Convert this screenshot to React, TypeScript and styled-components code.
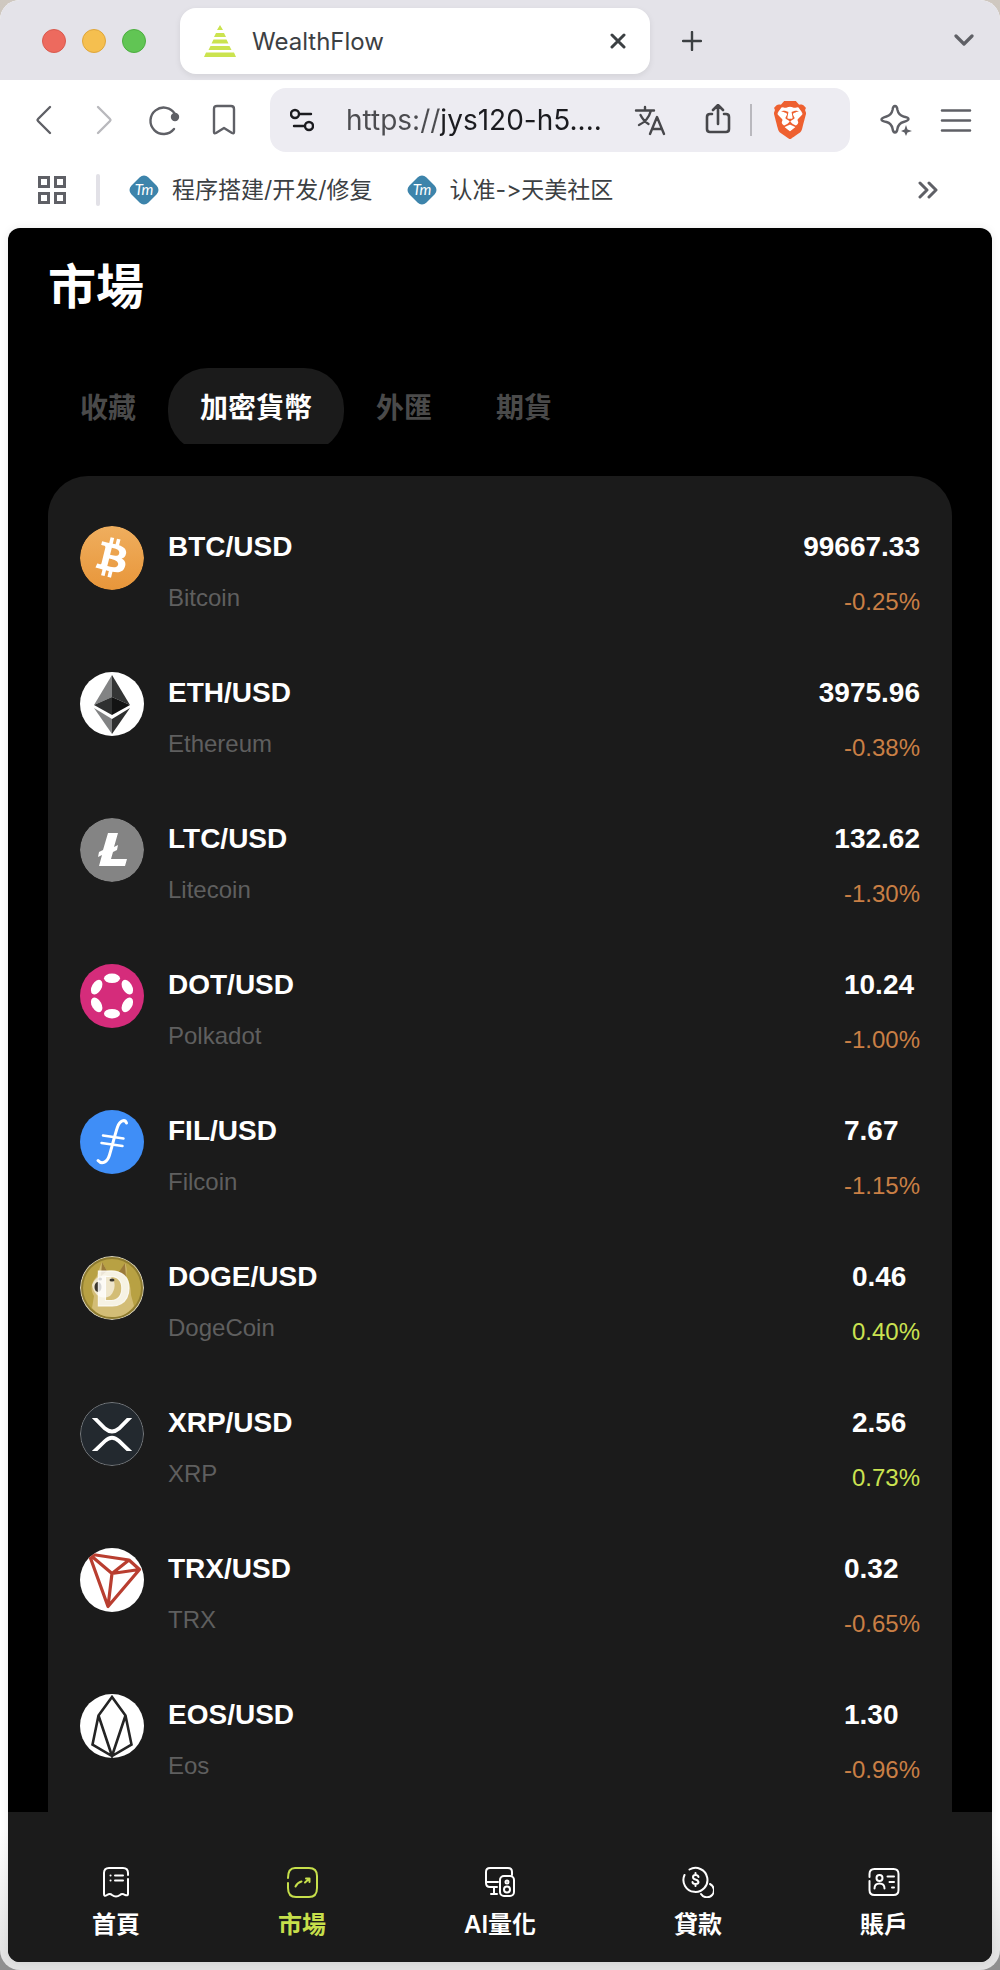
import React, { useState } from 'react';
import styled, { createGlobalStyle, css } from 'styled-components';
import { SiBitcoin, SiBrave } from 'react-icons/si';

const GlobalStyle = createGlobalStyle`
  *, *::before, *::after { box-sizing: border-box; }
  body {
    margin: 0;
    background: linear-gradient(#cfc8c0, #8f8f8f);
    font-family: "Liberation Sans", "Noto Sans CJK TC", sans-serif;
  }
  button { border: 0; padding: 0; background: none; font: inherit; color: inherit; cursor: pointer; }
  a { color: inherit; text-decoration: none; }
  h1, p, ul { margin: 0; padding: 0; }
  ul { list-style: none; }
  svg { display: block; }
`;

const uiFont = css`
  font-family: Inter, "Noto Sans CJK SC", sans-serif;
  font-variant-ligatures: none;
  font-feature-settings: "calt" 0;
`;

const Window = styled.div`
  display: flex;
  flex-direction: column;
  height: 100vh;
  border-radius: 20px;
  overflow: hidden;
  background: linear-gradient(#ffffff calc(100% - 140px), #e2e2e2 calc(100% - 8px));
`;

/* ---------- browser chrome ---------- */

const TabStrip = styled.header`
  ${uiFont}
  display: flex;
  align-items: center;
  height: 80px;
  padding: 2px 26px 0 42px;
  background: #e4e3e9;
  color: #3c4043;
`;

const Lights = styled.div`
  display: flex;
  gap: 16px;
  margin-right: 34px;
`;

const Light = styled.button<{ $fill: string; $edge: string }>`
  width: 24px;
  height: 24px;
  border-radius: 50%;
  background: ${(p) => p.$fill};
  border: 1px solid ${(p) => p.$edge};
`;

const BrowserTab = styled.div`
  display: flex;
  align-items: center;
  flex: 0 1 470px;
  gap: 16px;
  height: 66px;
  padding: 0 24px;
  border-radius: 16px;
  background: #ffffff;
  box-shadow: 0 2px 6px rgba(0, 0, 0, 0.08);
  font-size: 24px;
`;

const BrowserTabTitle = styled.span`
  flex: 1;
`;

const NewTab = styled.button`
  margin: 0 auto 0 32px;
`;

const TabSearch = styled.button`
  color: #5f6066;
`;

const Toolbar = styled.nav`
  display: flex;
  align-items: center;
  gap: 28px;
  height: 80px;
  padding: 0 28px;
  color: #5f6066;
`;

const IconButton = styled.button<{ $dim?: boolean }>`
  flex: none;
  width: 32px;
  height: 32px;
  color: ${(p) => (p.$dim ? '#b9b9bd' : 'inherit')};
`;

const AddressBar = styled.div`
  ${uiFont}
  display: flex;
  align-items: center;
  flex: 1;
  min-width: 0;
  height: 64px;
  margin: 0 2px;
  padding: 0 44px 0 20px;
  border-radius: 16px;
  background: #edecf2;
  color: #47474b;
`;

const AddressInput = styled.input`
  flex: 1;
  min-width: 0;
  margin: 0 16px 0 32px;
  padding: 0;
  border: 0;
  outline: 0;
  font-family: inherit;
  font-size: 28px;
  color: transparent;
  background: linear-gradient(90deg, #4c4c50 93px, #1b1b1f 93px);
  background-clip: text;
`;

const AddressActions = styled.div`
  display: flex;
  align-items: center;
  gap: 36px;
`;

const AddressDivider = styled.span`
  width: 2px;
  height: 32px;
  margin: 0 22px 0 16px;
  background: #b9b8be;
`;

const Bookmarks = styled.nav`
  ${uiFont}
  display: flex;
  align-items: center;
  height: 68px;
  padding: 0 62px 8px 38px;
  color: #5f6066;
`;

const BookmarkDivider = styled.span`
  width: 4px;
  height: 32px;
  margin: 0 29px 0 30px;
  border-radius: 2px;
  background: #e2e1e7;
`;

const Bookmark = styled.a`
  display: flex;
  align-items: center;
  gap: 13px;
  margin-right: 34px;
  font-size: 23px;
  line-height: 32px;
  color: #3c4043;
  white-space: nowrap;
`;

const MoreBookmarks = styled.button`
  margin-left: auto;
`;

/* ---------- page ---------- */

const Page = styled.div`
  display: flex;
  flex-direction: column;
  flex: 1;
  min-height: 0;
  margin: 0 8px 8px;
  border-radius: 12px;
  overflow: hidden;
  background: #000000;
  color: #ffffff;
  box-shadow: 0 0 8px rgba(0, 0, 0, 0.08);
`;

const Scroller = styled.main`
  flex: 1;
  min-height: 0;
  overflow-y: auto;
  scrollbar-width: none;
  padding: 24px 40px 0;
`;

const Title = styled.h1`
  font-size: 48px;
  line-height: 72px;
  font-weight: 700;
`;

const Segments = styled.div`
  display: flex;
  height: 76px;
  margin: 44px 0 32px;
  overflow: hidden;
`;

const Segment = styled.button<{ $active: boolean }>`
  flex: none;
  height: 84px;
  padding: 0 32px 8px;
  border-radius: 40px;
  font-size: 28px;
  font-weight: 700;
  color: ${(p) => (p.$active ? '#ffffff' : '#4a4a4a')};
  background: ${(p) => (p.$active ? '#1b1b1b' : 'transparent')};
`;

const QuoteList = styled.ul`
  padding: 25px 32px 0;
  border-radius: 40px 40px 0 0;
  background: #1b1b1b;
`;

const QuoteRow = styled.a`
  display: flex;
  align-items: flex-start;
  gap: 24px;
  padding: 25px 0;
  line-height: 40px;
`;

const CoinMark = styled.span`
  flex: none;
  width: 64px;
  height: 64px;
  border-radius: 50%;
  overflow: hidden;
`;

const Names = styled.div`
  flex: 1;
  display: grid;
  gap: 10px;
`;

const Figures = styled.div`
  display: grid;
  gap: 14px;
`;

const Strong = styled.p`
  font-size: 28px;
  line-height: 42px;
  font-weight: 700;
`;

const CoinName = styled.p`
  font-size: 24px;
  color: #5f5f5f;
`;

const Change = styled.p<{ $up: boolean }>`
  font-size: 24px;
  text-align: right;
  color: ${(p) => (p.$up ? '#cbe351' : '#c97f45')};
`;

const TabBar = styled.nav`
  display: flex;
  justify-content: space-between;
  height: 150px;
  padding: 54px 84px 0;
  background: #1b1b1b;
`;

const TabItem = styled.a<{ $active: boolean }>`
  display: flex;
  flex-direction: column;
  align-items: center;
  gap: 11px;
  font-family: Inter, "Noto Sans CJK TC", sans-serif;
  font-size: 24px;
  font-weight: 600;
  line-height: 32px;
  color: ${(p) => (p.$active ? '#c6df4b' : '#ffffff')};
`;

/* ---------- drawings ---------- */

const line = {
  fill: 'none',
  stroke: 'currentColor',
  strokeLinecap: 'round' as const,
  strokeLinejoin: 'round' as const,
};

const Line = ({ size = 32, w = 2, children }: { size?: number; w?: number; children: React.ReactNode }) => (
  <svg width={size} height={size} viewBox={`0 0 ${size} ${size}`} {...line} strokeWidth={w} aria-hidden="true">
    {children}
  </svg>
);

const Pyramid = () => (
  <svg width="32" height="32" viewBox="0 0 32 32" fill="#cbe34f" aria-hidden="true">
    <path d="M16 0l3 5h-6zM12 8h8l2 4H10zM9.500 14.500h13l2 4h-17zM6.500 21h19l2 4h-23zM2 27.500h28l2 4.500H0z" />
  </svg>
);

const Diamond = () => (
  <svg width="30" height="30" viewBox="0 0 30 30" aria-hidden="true">
    <rect x="3" y="3" width="24" height="24" rx="6" fill="#3d84ab" transform="rotate(45 15 15)" />
    <text x="15" y="20" textAnchor="middle" fontFamily="Lato, sans-serif" fontStyle="italic" fontSize="15" fill="#fff">Tm</text>
  </svg>
);

const Bitcoin = () => (
  <svg width="64" height="64" viewBox="0 0 64 64">
    <defs>
      <linearGradient id="btc" x1="0" y1="0" x2="0" y2="1">
        <stop offset="0" stopColor="#efae5e" />
        <stop offset="1" stopColor="#e8963a" />
      </linearGradient>
    </defs>
    <circle cx="32" cy="32" r="31" fill="#fff" />
    <SiBitcoin size={64} fill="url(#btc)" />
  </svg>
);

const Ethereum = () => (
  <svg width="64" height="64" viewBox="0 0 64 64">
    <rect width="64" height="64" fill="#fff" />
    <path d="M32 3L14 33l18-8z" fill="#828384" />
    <path d="M32 3l18 30-18-8z" fill="#343535" />
    <path d="M14 33l18-8v18z" fill="#2f3030" />
    <path d="M50 33l-18-8v18z" fill="#131313" />
    <path d="M14 36l18 11v15z" fill="#828384" />
    <path d="M50 36L32 47v15z" fill="#2f3030" />
  </svg>
);

const Litecoin = () => (
  <svg width="64" height="64" viewBox="0 0 64 64">
    <circle cx="32" cy="32" r="32" fill="#848484" />
    <path d="M28 15h10l-4 14 4-2-1 5-4 2-2 7h16l-2 7H19l3-11-4 2 1-5 4-2z" fill="#fff" />
  </svg>
);

const Polkadot = () => (
  <svg width="64" height="64" viewBox="0 0 64 64">
    <rect width="64" height="64" fill="#d52c7b" />
    {[0, 60, 120, 180, 240, 300].map((a) => (
      <ellipse key={a} cx="32" cy="14.300" rx="8" ry="4.800" fill="#fff" transform={`rotate(${a} 32 32)`} />
    ))}
  </svg>
);

const Filecoin = () => (
  <svg width="64" height="64" viewBox="0 0 64 64" fill="none" stroke="#fff" strokeLinecap="round">
    <rect width="64" height="64" fill="#3f8ef7" stroke="none" />
    <path d="M46.500 13C45 9 40 10 37.500 17C34.500 26 32 37 29.500 45C27.500 52 22 55 18 50.500" strokeWidth="3" />
    <path d="M23 25.500l20.500 3M21.500 33l21 3" strokeWidth="2.500" />
  </svg>
);

const Dogecoin = () => (
  <svg width="64" height="64" viewBox="0 0 64 64">
    <circle cx="32" cy="32" r="32" fill="#d9d3bb" />
    <circle cx="32" cy="32" r="31" fill="#8f7c30" />
    <circle cx="32" cy="32" r="29" fill="#b8a143" />
    <path d="M22 6l5 9c4-2 9-1 13 1l5-9c2 4 2 9 1 13 4 7 5 13 5 19l3 11c-7 9-14 11-22 11-8 0-15-3-20-9l2-12c-4-7-3-13 3-20 2-5 3-10 5-14z" fill="#d3bd76" />
    <path d="M22 6l5 9-6 5zM45 7l-6 9 7 5z" fill="#9b7a39" />
    <path d="M12 29c3-8 10-12 19-8 5 4 5 13-1 19-8 4-16 0-18-11z" fill="#efe6cb" />
    <ellipse cx="18" cy="31" rx="3.500" ry="5" fill="#3c372d" />
    <ellipse cx="32" cy="24" rx="2.500" ry="1.500" fill="#3c372d" />
    <ellipse cx="20" cy="23" rx="2" ry="1.500" fill="#3c372d" />
    <text x="33" y="50" textAnchor="middle" fontFamily="Liberation Sans, sans-serif" fontWeight="700" fontSize="50" fill="#fff" fillOpacity="0.800" stroke="#fff" strokeOpacity="0.800" strokeWidth="1">D</text>
  </svg>
);

const Ripple = () => (
  <svg width="64" height="64" viewBox="0 0 64 64">
    <clipPath id="xrp"><rect y="16" width="64" height="33" /></clipPath>
    <circle cx="32" cy="32" r="31.500" fill="#23292f" stroke="#777b7f" />
    <path d="M12 13.500L25 26.500Q32 32.500 39 26.500L52 13.500M12 51.500L25 39Q32 32.500 39 39L52 51.500" clipPath="url(#xrp)" fill="none" stroke="#fff" strokeWidth="3.800" />
  </svg>
);

const Tron = () => (
  <svg width="64" height="64" viewBox="0 0 64 64" fill="none" stroke="#b93e30" strokeWidth="3.200" strokeLinejoin="round">
    <rect width="64" height="64" fill="#fff" stroke="none" />
    <path d="M9 6l40 6 10.500 9.500L28 58.500zM9 6l23 19.500L28 58.500M49 12L32 25.500l27.500-4" />
  </svg>
);

const Eos = () => (
  <svg width="64" height="64" viewBox="0 0 64 64" fill="none" stroke="#242424" strokeWidth="2.600">
    <rect width="64" height="64" fill="#fff" stroke="none" />
    <path d="M32 3L18.500 21.500 12.500 50.500 32 62l19.500-11.500-6-29zM18.500 21.500L32 62l13.500-40.500" />
  </svg>
);

const HomeIcon = () => (
  <Line>
    <path d="M28 9V7q0-5-5-5H9Q4 2 4 7v21q0 3 3 1 3-2 5 0 4 3 8 0 2-2 5 0 3 1 3-1V13" />
    <path d="M10.500 9.500h.1M15 9.500h8M10.500 14.500h.1M15 14.500h8" />
  </Line>
);

const MarketIcon = () => (
  <Line>
    <path d="M2 12Q2 2 9 2h14q8 0 8 8v12q0 9-8 9H10q-8 0-8-9v-5" />
    <path d="M9.500 20.500q2-4 6-5M19 16.500l4-3.500M20 12.500h3.500V16" />
  </Line>
);

const QuantIcon = () => (
  <Line>
    <path d="M13 21H6q-4 0-4-4V6q0-4 4-4h18q4 0 4 4v3M2 16h12M10 21v7M7 28h6" />
    <rect x="16" y="10" width="14" height="20" rx="4" />
    <circle cx="23" cy="16" r="1.500" />
    <circle cx="23" cy="23.500" r="3" />
  </Line>
);

const LoanIcon = () => (
  <Line>
    <path d="M7.500 3.500a12 12 0 1 1-5 5.500" />
    <path d="M28 18a7 7 0 1 1-9 10" />
    <path d="M16.500 11q-.5-2-3-2t-2.500 2q0 2 2.500 2.500t3 2.500q0 2-3 2t-3-2M13.500 7v2M13.500 18v2" />
  </Line>
);

const AccountIcon = () => (
  <Line>
    <path d="M1.500 11V8q0-5 5-5h19q5 0 5 5v16q0 5-5 5h-19q-5 0-5-5v-9" />
    <circle cx="11.500" cy="12" r="3" />
    <path d="M6.500 22.500q0-5 5-5t5 5M19.500 10.500H26M21.500 16H26M24 21.500h2" />
  </Line>
);

/* ---------- data ---------- */

const quotes = [
  { code: 'BTC', name: 'Bitcoin', price: '99667.33', change: '-0.25%', Mark: Bitcoin },
  { code: 'ETH', name: 'Ethereum', price: '3975.96', change: '-0.38%', Mark: Ethereum },
  { code: 'LTC', name: 'Litecoin', price: '132.62', change: '-1.30%', Mark: Litecoin },
  { code: 'DOT', name: 'Polkadot', price: '10.24', change: '-1.00%', Mark: Polkadot },
  { code: 'FIL', name: 'Filcoin', price: '7.67', change: '-1.15%', Mark: Filecoin },
  { code: 'DOGE', name: 'DogeCoin', price: '0.46', change: '0.40%', Mark: Dogecoin },
  { code: 'XRP', name: 'XRP', price: '2.56', change: '0.73%', Mark: Ripple },
  { code: 'TRX', name: 'TRX', price: '0.32', change: '-0.65%', Mark: Tron },
  { code: 'EOS', name: 'Eos', price: '1.30', change: '-0.96%', Mark: Eos },
];

const segments = ['收藏', '加密貨幣', '外匯', '期貨'];

const tabs = [
  { label: '首頁', Icon: HomeIcon },
  { label: '市場', Icon: MarketIcon },
  { label: 'AI量化', Icon: QuantIcon },
  { label: '貸款', Icon: LoanIcon },
  { label: '賬戶', Icon: AccountIcon },
];

const BrowserChrome = () => (
  <>
    <TabStrip>
      <Lights>
        <Light aria-label="Close window" $fill="#ed6a5e" $edge="#d95a4e" />
        <Light aria-label="Minimize window" $fill="#f5bf4f" $edge="#dfa63a" />
        <Light aria-label="Zoom window" $fill="#61c554" $edge="#4cae3f" />
      </Lights>
      <BrowserTab>
        <Pyramid />
        <BrowserTabTitle>WealthFlow</BrowserTabTitle>
        <button aria-label="Close tab">
          <Line size={16} w={3}><path d="M2 2l12 12M14 2L2 14" /></Line>
        </button>
      </BrowserTab>
      <NewTab aria-label="New tab">
        <Line size={20} w={2.400}><path d="M10 1v18M1 10h18" /></Line>
      </NewTab>
      <TabSearch aria-label="Search tabs">
        <Line size={20} w={3.200}><path d="M2 5l8 8 8-8" /></Line>
      </TabSearch>
    </TabStrip>
    <Toolbar>
      <IconButton aria-label="Back"><Line w={2.4}><path d="M22 3L10 15q-1 1 0 2l12 12" /></Line></IconButton>
      <IconButton aria-label="Forward" $dim><Line w={2.4}><path d="M10 3l12 12q1 1 0 2L10 29" /></Line></IconButton>
      <IconButton aria-label="Reload">
        <Line w={2.4}>
          <path d="M27 10A13.200 13.200 0 1 0 26 25" />
          <circle cx="27" cy="13" r="3" fill="currentColor" />
        </Line>
      </IconButton>
      <IconButton aria-label="Bookmark">
        <Line w={2.4}><path d="M6 5q0-3 3-3h14q3 0 3 3v23q0 2-2 1l-8-5-8 5q-2 1-2-1z" /></Line>
      </IconButton>
      <AddressBar>
        <Line size={24} w={2.4}>
          <g color="#1b1b1f" stroke="#1b1b1f">
            <circle cx="5" cy="6" r="4" /><path d="M10 6h11M4 18h10" /><circle cx="19" cy="18" r="4" />
          </g>
        </Line>
        <AddressInput aria-label="Address" defaultValue="https://jys120-h5...." />
        <AddressActions>
          <IconButton aria-label="Translate">
            <Line w={2.4}><path d="M2 6.500h18M11 3v3.500M5 21q9-4 12-14.500M6.500 11q3 6 8 9M16 30l7-17 7 17M18 25h10" /></Line>
          </IconButton>
          <IconButton aria-label="Share">
            <Line w={2.600}><path d="M10 10H8q-3 0-3 3v12q0 3 3 3h16q3 0 3-3V13q0-3-3-3h-2M16 20V1M11 6l5-5 5 5" /></Line>
          </IconButton>
        </AddressActions>
        <AddressDivider />
        <button aria-label="Shields">
          <svg width="32" height="38" viewBox="0 0 32 38">
            <path d="M6 6h20l2 8-4 12-8 5-8-5-4-12z" fill="#fff" />
            <SiBrave y={0} size={38} x={-3} fill="#ee6030" />
          </svg>
        </button>
      </AddressBar>
      <IconButton aria-label="Assistant">
        <Line w={2.4}>
          <path d="M15 2q2 0 2.500 4 1 5 6 6.500 5 1 5 2.500t-5 3q-5 1.500-6 6.500-.5 4-2.500 4t-2.500-4q-1-5-6-6.500-5-1-5-2.500t5-3q5-1.500 6-6.500 .5-4 2.500-4z" />
          <path d="M26 21l1.500 4.500L32 27l-4.500 1.500L26 32l-1.500-3.500L21 27l3.500-1.500z" fill="currentColor" stroke="none" />
        </Line>
      </IconButton>
      <IconButton aria-label="Menu"><Line w={2.600}><path d="M2 6.500h28M2 16.500h28M2 26.500h28" /></Line></IconButton>
    </Toolbar>
    <Bookmarks>
      <button aria-label="Apps">
        <svg width="28" height="28" viewBox="0 0 28 28" {...line} strokeLinejoin="miter" strokeWidth="3">
          <path d="M1.500 1.500h9v9h-9zM17.500 1.500h9v9h-9zM1.500 17.500h9v9h-9zM17.500 17.500h9v9h-9z" />
        </svg>
      </button>
      <BookmarkDivider />
      <Bookmark href="#tm-dev"><Diamond />程序搭建/开发/修复</Bookmark>
      <Bookmark href="#tm-community"><Diamond />认准-&gt;天美社区</Bookmark>
      <MoreBookmarks aria-label="More bookmarks">
        <Line size={20} w={3}><path d="M2 3l7 7-7 7M11 3l7 7-7 7" /></Line>
      </MoreBookmarks>
    </Bookmarks>
  </>
);

export default function App() {
  const [segment, setSegment] = useState('加密貨幣');

  return (
    <>
      <GlobalStyle />
      <Window>
        <BrowserChrome />
        <Page>
          <Scroller>
            <Title>市場</Title>
            <Segments role="tablist">
              {segments.map((s) => (
                <Segment key={s} role="tab" aria-selected={s === segment} $active={s === segment} onClick={() => setSegment(s)}>
                  {s}
                </Segment>
              ))}
            </Segments>
            <QuoteList>
              {quotes.map(({ code, name, price, change, Mark }) => (
                <li key={code}>
                  <QuoteRow href={`#${code}`}>
                    <CoinMark aria-hidden="true"><Mark /></CoinMark>
                    <Names>
                      <Strong>{code}/USD</Strong>
                      <CoinName>{name}</CoinName>
                    </Names>
                    <Figures>
                      <Strong>{price}</Strong>
                      <Change $up={!change.startsWith('-')}>{change}</Change>
                    </Figures>
                  </QuoteRow>
                </li>
              ))}
            </QuoteList>
          </Scroller>
          <TabBar>
            {tabs.map(({ label, Icon }) => (
              <TabItem key={label} href={`#${label}`} $active={label === '市場'}>
                <Icon />
                {label}
              </TabItem>
            ))}
          </TabBar>
        </Page>
      </Window>
    </>
  );
}
